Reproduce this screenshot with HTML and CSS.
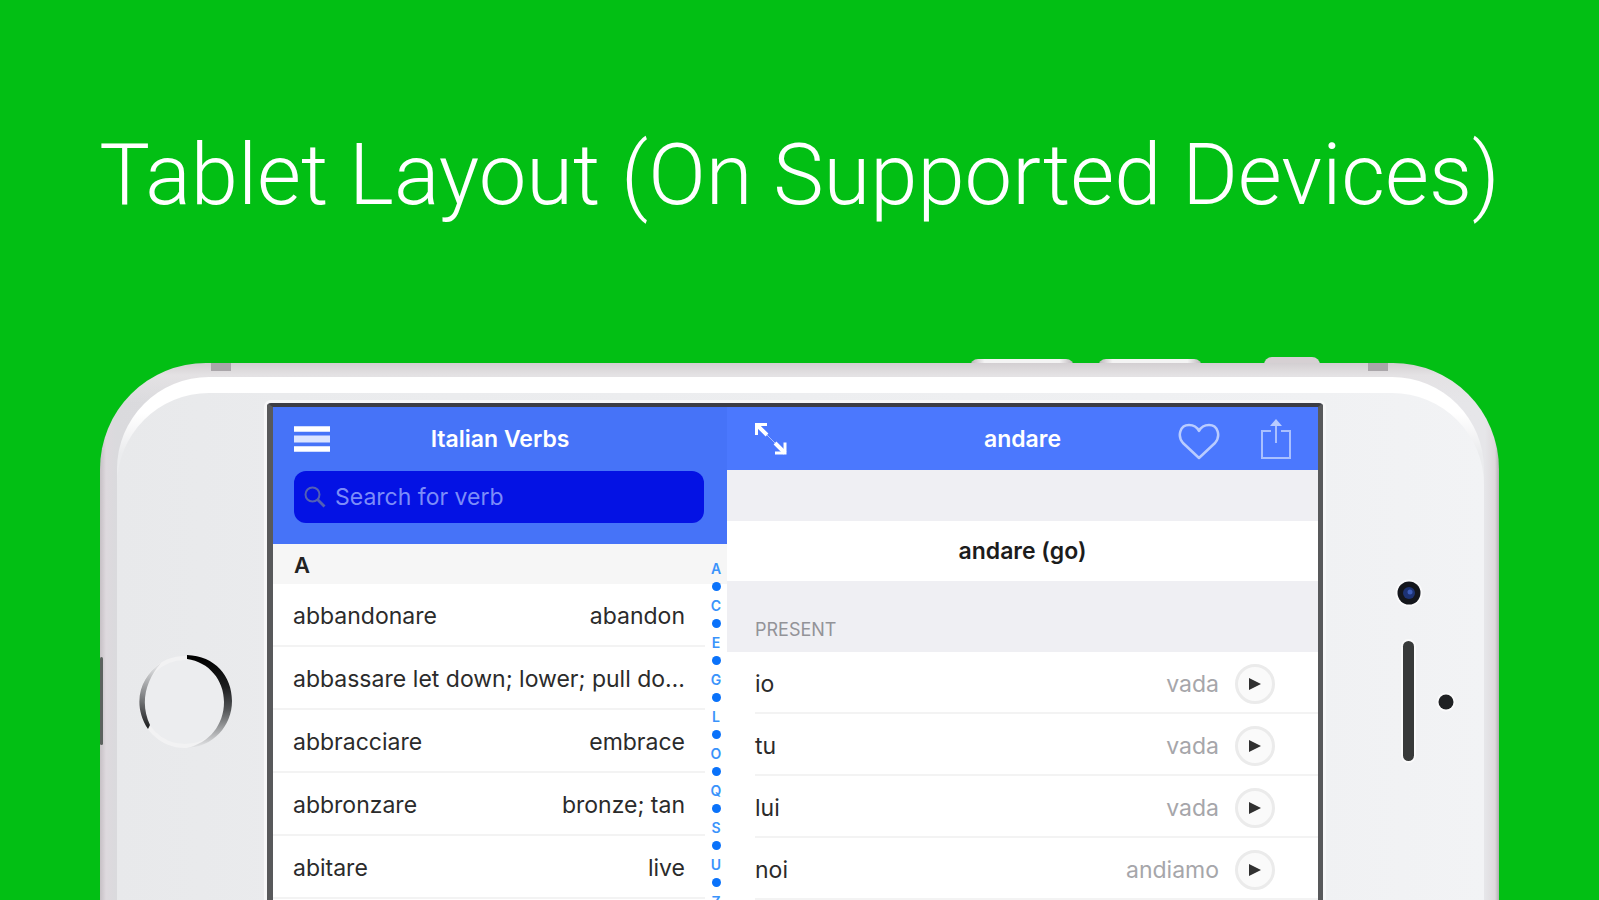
FILE: index.html
```html
<!DOCTYPE html>
<html lang="en">
<head>
<meta charset="utf-8">
<meta name="viewport" content="width=device-width, initial-scale=1">
<title>Italian Verbs – Tablet Layout</title>
<link rel="stylesheet" href="styles.css">
</head>
<body>
<main class="promo">
  <h1 class="headline">Tablet Layout (On Supported Devices)</h1>
  <div class="phone">
    <span class="side-key key-volume-down"></span>
    <span class="side-key key-volume-up"></span>
    <span class="side-key key-mute"></span>
    <span class="side-key key-left"></span>
    <div class="rim">
      <span class="antenna antenna-left"></span>
      <span class="antenna antenna-right"></span>
      <div class="glass">
        <div class="face">
          <div class="bezel bezel-home">
            <svg class="home-button" viewBox="0 0 96 96" fill="none" aria-hidden="true">
              <defs>
                <linearGradient id="ringRight" gradientUnits="userSpaceOnUse" x1="60" y1="4" x2="66" y2="92">
                  <stop offset="0" stop-color="#000"/>
                  <stop offset="0.35" stop-color="#1c1d1f"/>
                  <stop offset="0.6" stop-color="#505254"/>
                  <stop offset="1" stop-color="#e0e1e3"/>
                </linearGradient>
                <linearGradient id="ringLeft" gradientUnits="userSpaceOnUse" x1="20" y1="14" x2="10" y2="74">
                  <stop offset="0" stop-color="#dcdddf"/>
                  <stop offset="0.5" stop-color="#808284"/>
                  <stop offset="1" stop-color="#1c1d1f"/>
                </linearGradient>
              </defs>
              <circle cx="48" cy="48" r="44" fill="#ecedef" stroke="#f2f2f3" stroke-width="4"/>
              <path d="M50 1C78 2 95 22 95 47C95 72 76 93 50 94C72 89 87 71 87 48C87 26 72 8 50 5Z" fill="url(#ringRight)"/>
              <path d="M24 9C4 22 -6 49 11 75L13 71C3 50 8 27 24 9Z" fill="url(#ringLeft)"/>
            </svg>
          </div>
          <div class="screen">
            <section class="pane verbs">
              <header class="verbs-head">
                <div class="bar">
                  <button class="icon-button" aria-label="Menu">
                    <svg width="36" height="28" viewBox="0 0 36 28"><path d="M0 4H36M0 24H36" stroke="#fff" stroke-width="5.500"/><path d="M0 14H36" stroke="#dbe4ff" stroke-width="7"/></svg>
                  </button>
                  <h2 class="bar-title">Italian Verbs</h2>
                  <span class="bar-balance"></span>
                </div>
                <label class="search">
                  <svg width="22" height="22" viewBox="0 0 22 22" fill="none" stroke="#5360b4" aria-hidden="true"><circle cx="8.500" cy="8.500" r="7" stroke-width="2"/><path d="M13.500 13.500L20.500 20.500" stroke-width="2.800"/></svg>
                  <input class="search-input" type="text" placeholder="Search for verb" aria-label="Search for verb">
                </label>
              </header>
              <div class="verbs-body">
                <h3 class="letter">A</h3>
                <ul class="verb-list">
                  <li class="verb"><span>abbandonare</span><span>abandon</span></li>
                  <li class="verb"><span>abbassare</span><span>let down; lower; pull do…</span></li>
                  <li class="verb"><span>abbracciare</span><span>embrace</span></li>
                  <li class="verb"><span>abbronzare</span><span>bronze; tan</span></li>
                  <li class="verb"><span>abitare</span><span>live</span></li>
                </ul>
                <nav class="index" aria-label="Letter index">
                  <a href="#a">A</a><i></i><a href="#c">C</a><i></i><a href="#e">E</a><i></i><a href="#g">G</a><i></i><a href="#l">L</a><i></i><a href="#o">O</a><i></i><a href="#q">Q</a><i></i><a href="#s">S</a><i></i><a href="#u">U</a><i></i><a href="#z">Z</a>
                </nav>
              </div>
            </section>
            <section class="pane detail">
              <header class="bar detail-bar">
                <button class="icon-button" aria-label="Expand">
                  <svg width="32" height="32" viewBox="0 0 32 32" fill="none" stroke="#fff"><path d="M1.500 12V1.500H12M20 30H30V19.500" stroke-width="3"/><path d="M2 2L12 12M20 20L30 30" stroke-width="4"/><path d="M12 12L20 20" stroke-width="1" opacity="0.500"/></svg>
                </button>
                <h2 class="bar-title">andare</h2>
                <div class="actions">
                  <button class="icon-button" aria-label="Favourite">
                    <svg width="42" height="42" viewBox="0 -5 42 42" fill="none" stroke="#b9ccff" stroke-width="2.500" stroke-linejoin="round"><path d="M21 35L5 20C-1 13 2 2 11 2C16 2 19 4 21 8C23 4 26 2 31 2C40 2 43 13 37 20Z"/></svg>
                  </button>
                  <button class="icon-button" aria-label="Share">
                    <svg width="32" height="42" viewBox="0 0 32 42" fill="none" stroke="#a9c0ff" stroke-width="2"><path d="M11 13H2V40H30V13H21M16 25V4"/><path d="M16 1L22 8H10Z" fill="#b9ccff" stroke="none"/></svg>
                  </button>
                </div>
              </header>
              <h3 class="verb-title">andare (go)</h3>
              <h4 class="tense">PRESENT</h4>
              <ul class="forms">
                <li class="form"><span>io</span><span class="value">vada</span><button class="play" aria-label="Play io"><svg width="12" height="14" viewBox="0 0 12 14"><path d="M0 1L12 7L0 13Z" fill="#303030"/></svg></button></li>
                <li class="form"><span>tu</span><span class="value">vada</span><button class="play" aria-label="Play tu"><svg width="12" height="14" viewBox="0 0 12 14"><path d="M0 1L12 7L0 13Z" fill="#303030"/></svg></button></li>
                <li class="form"><span>lui</span><span class="value">vada</span><button class="play" aria-label="Play lui"><svg width="12" height="14" viewBox="0 0 12 14"><path d="M0 1L12 7L0 13Z" fill="#303030"/></svg></button></li>
                <li class="form"><span>noi</span><span class="value">andiamo</span><button class="play" aria-label="Play noi"><svg width="12" height="14" viewBox="0 0 12 14"><path d="M0 1L12 7L0 13Z" fill="#303030"/></svg></button></li>
              </ul>
            </section>
          </div>
          <div class="bezel bezel-camera">
            <svg class="sensors" viewBox="0 0 64 190" aria-hidden="true">
              <circle cx="16" cy="15" r="13.500" fill="#fafafb"/>
              <circle cx="16" cy="15" r="11.500" fill="#14161c"/>
              <circle cx="16" cy="15" r="6" fill="#1d3273"/>
              <circle cx="17" cy="14" r="2.500" fill="#3c5cb8"/>
              <rect x="8" y="61" width="15" height="124" rx="7.500" fill="#fafafb"/>
              <rect x="10" y="63" width="11" height="120" rx="5.500" fill="#383a3a"/>
              <circle cx="53" cy="124" r="9.500" fill="#fafafb"/>
              <circle cx="53" cy="124" r="7.500" fill="#1f2123"/>
            </svg>
          </div>
        </div>
      </div>
    </div>
  </div>
</main>
</body>
</html>
```
FILE: styles.css
```css
* { box-sizing: border-box; }

body {
  margin: 0;
  background: #02bf14;
  font-family: Inter, "Liberation Sans", sans-serif;
}

h1, h2, h3, h4, ul { margin: 0; padding: 0; }
ul { list-style: none; }

button {
  padding: 0;
  border: 0;
  background: none;
  display: flex;
  align-items: center;
  justify-content: center;
}

.promo {
  height: 100vh;
  overflow: hidden;
  display: flex;
  flex-direction: column;
}

.headline {
  flex: none;
  padding: 123px 0 136px;
  color: #fff;
  font-family: Roboto, Inter, sans-serif;
  font-size: 85px;
  font-weight: 300;
  line-height: 104px;
  text-align: center;
  white-space: nowrap;
}

/* Device */
.phone {
  position: relative;
  flex: 1;
  display: flex;
  margin: 0 100px;
}

.side-key {
  position: absolute;
  top: -4px;
  height: 12px;
  width: 104px;
  border-radius: 8px 8px 0 0;
  background: linear-gradient(90deg, #b9b2b7, #f4f4f4 14%, #f4f4f4 86%, #b9b2b7);
}
.key-volume-down { right: 425px; }
.key-volume-up { right: 297px; }
.key-mute { top: -6px; right: 179px; width: 56px; background: #d6d0d3; }
.key-left {
  z-index: 1;
  top: 294px;
  left: 0;
  width: 3px;
  height: 88px;
  border-radius: 2px;
  background: #5b625e;
}

.rim {
  position: relative;
  flex: 1;
  display: flex;
  padding: 14px 15px 0 17px;
  border-radius: 106px 106px 0 0;
  background: linear-gradient(#d3cfd2, #e4e2e4 12px, transparent 40px), linear-gradient(90deg, #c6c0c5, #ded9de 6px, #dadadd 16px, #e4e4e7 50%, #e6e6e9 calc(100% - 14px), #ded9dc calc(100% - 4px), #b5afb3);
}

.antenna {
  position: absolute;
  top: 0;
  width: 20px;
  height: 8px;
  background: #aaa6aa;
}
.antenna-left { left: 111px; }
.antenna-right { right: 111px; }

.glass {
  flex: 1;
  display: flex;
  padding-top: 16px;
  border-radius: 92px 92px 0 0;
  background: linear-gradient(#fff 36px, #ebecee 76px);
  overflow: hidden;
}

.face {
  flex: 1;
  display: flex;
  border-radius: 92px 92px 0 0;
  background: linear-gradient(90deg, #e8e9eb, #eaebed 12%, #f0f1f3 88%, #f2f3f5);
}

.bezel { flex: none; display: flex; align-items: flex-start; }
.bezel-home { width: 150px; padding: 261px 0 0 20px; }
.bezel-camera { width: 161px; padding: 185px 0 0 70px; }
.home-button { width: 96px; height: 96px; }
.sensors { width: 64px; height: 190px; }

.screen {
  flex: 1;
  min-width: 0;
  display: grid;
  grid-template-columns: 454fr 591fr;
  margin-top: 10px;
  border: solid #58595b;
  border-width: 4px 5px 0 6px;
  border-top-color: #3c3d45;
  border-radius: 4px 4px 0 0;
  box-shadow: 0 0 0 3px #f7f7f8;
  background: #fff;
}

.pane { min-width: 0; }

/* Bars */
.bar {
  display: flex;
  align-items: center;
  justify-content: space-between;
  height: 64px;
  padding: 0 21px;
}
.bar-title {
  color: #fff;
  font-size: 23px;
  font-weight: 600;
  line-height: 28px;
}
.bar-balance { width: 36px; }

.verbs-head { height: 137px; background: #4673f8; }

.search {
  display: flex;
  align-items: center;
  gap: 9px;
  height: 52px;
  margin: 0 23px 0 21px;
  padding: 0 10px;
  border-radius: 12px;
  background: #0412e4;
}
.search-input {
  flex: 1;
  min-width: 0;
  padding: 0;
  border: 0;
  outline: 0;
  background: none;
  color: #fff;
  font: 400 23px/28px Inter, "Liberation Sans", sans-serif;
}
.search-input::placeholder { color: #7c8cf8; opacity: 1; }

/* Verb list */
.verbs-body { position: relative; }

.letter {
  height: 40px;
  padding-left: 21px;
  background: #f6f6f6;
  color: #222;
  font-size: 22px;
  font-weight: 600;
  line-height: 42px;
}

.verb {
  display: flex;
  align-items: center;
  justify-content: space-between;
  height: 63px;
  margin-right: 22px;
  padding: 3px 20px 0;
  border-bottom: 2px solid #f3f3f3;
  color: #2b2b2b;
  font-size: 23px;
  line-height: 28px;
  white-space: nowrap;
}

.index {
  position: absolute;
  top: 15px;
  right: 0;
  width: 22px;
  display: flex;
  flex-direction: column;
  align-items: center;
}
.index a {
  height: 19px;
  color: #3a93fb;
  font-size: 14px;
  font-weight: 600;
  line-height: 19px;
  text-decoration: none;
}
.index i {
  width: 9px;
  height: 9px;
  margin: 4px 0 5px;
  border-radius: 50%;
  background: #0a72fa;
}

/* Conjugation detail */
.detail { background: #efeff3; }
.detail-bar {
  position: relative;
  height: 63px;
  padding: 0 26px 0 28px;
  background: #4b78fe;
}
.detail-bar .bar-title {
  position: absolute;
  inset: 18px 0 auto;
  text-align: center;
  pointer-events: none;
}
.actions { display: flex; align-items: center; gap: 40px; }

.verb-title {
  height: 60px;
  margin-top: 51px;
  background: #fff;
  color: #1c1c1c;
  font-size: 23px;
  font-weight: 600;
  line-height: 60px;
  text-align: center;
}

.tense {
  height: 71px;
  padding: 36px 28px 0;
  color: #939398;
  font-size: 18px;
  font-weight: 400;
  line-height: 26px;
}

.forms { background: #fff; }
.form {
  display: flex;
  align-items: center;
  gap: 16px;
  height: 62px;
  margin-left: 28px;
  padding: 4px 43px 0 0;
  border-bottom: 2px solid #f3f3f3;
  color: #2b2b2b;
  font-size: 23px;
  line-height: 28px;
}
.value { margin-left: auto; color: #a6a6aa; }
.play {
  width: 40px;
  height: 40px;
  border: 3px solid #ebebeb;
  border-radius: 50%;
  background: #fafafa;
}
```
